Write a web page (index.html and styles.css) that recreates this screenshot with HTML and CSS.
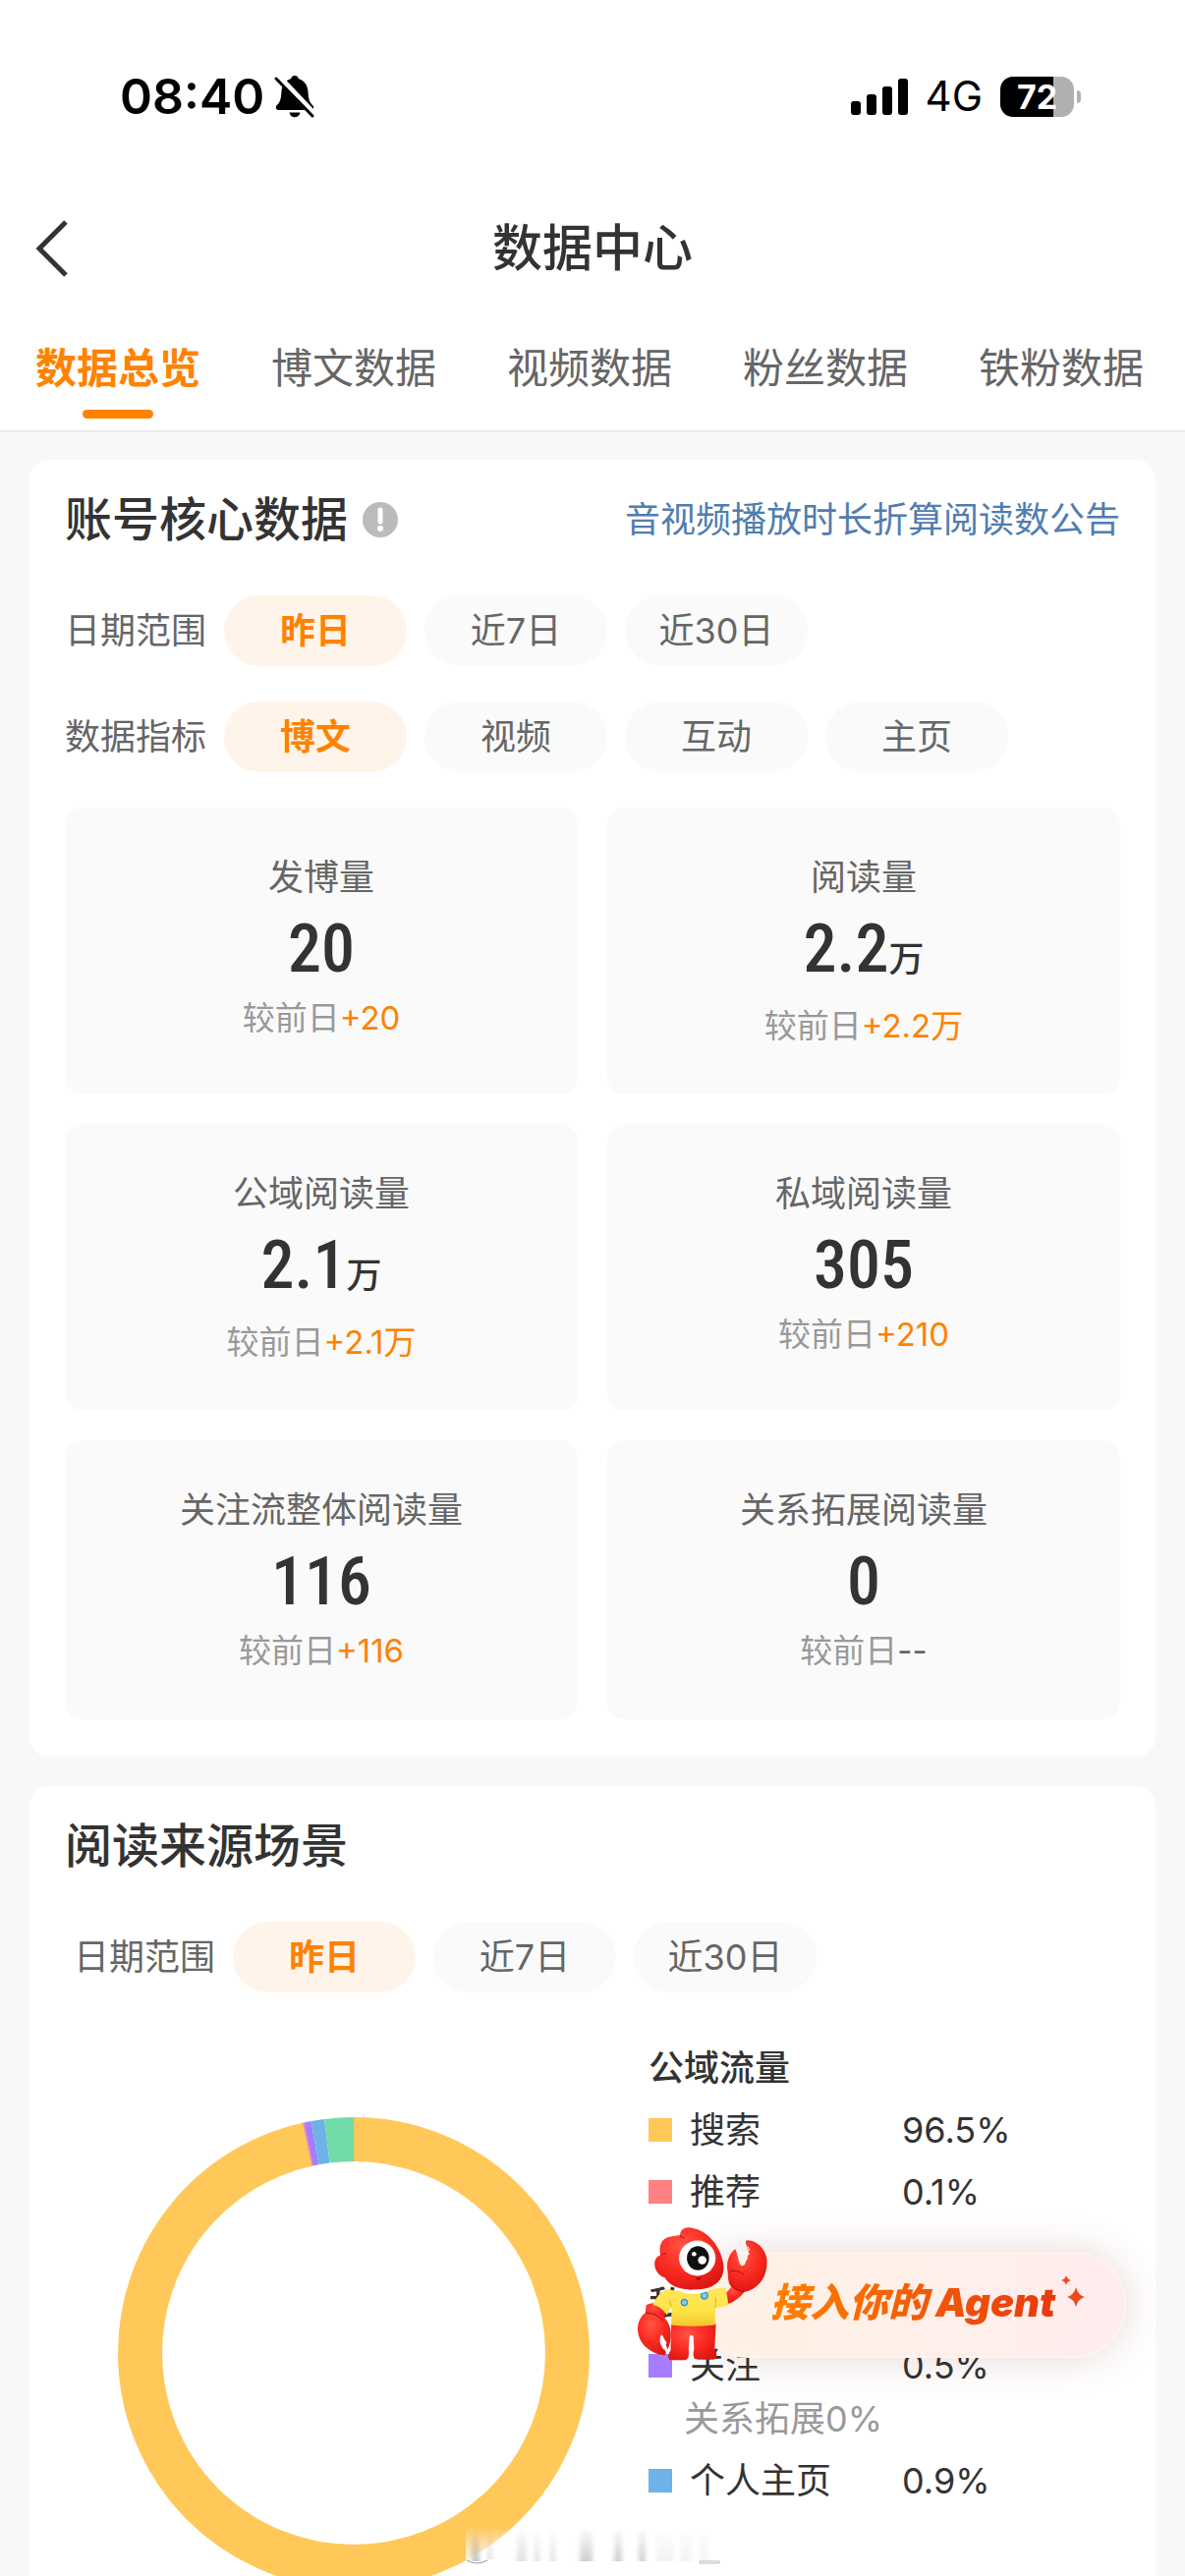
FILE: index.html
```html
<!DOCTYPE html>
<html lang="zh-CN">

<head>
    <meta charset="UTF-8">
    <meta name="viewport" content="width=device-width, initial-scale=1.0">
    <title>数据中心</title>
    <link rel="stylesheet" href="styles.css">
</head>

<body>
    <div class="app">
        <div class="status-bar">
            <span class="time">08:40</span>
            <svg class="bell" viewBox="0 0 42 44" width="42" height="44" aria-hidden="true">
                <path d="M21 1c2 0 3.500 1.300 3.700 3C31 6 34 11 34.500 17c.4 8 1.500 11 5 14.500 1.500 2 .5 4.500-2 4.500H4.500C2 36 1 33.500 2.500 31.500 6 28 7 25 7.500 17 8 11 11 6 17.300 4 17.500 2.300 19 1 21 1z" />
                <path d="M15.500 38.500h11c-.5 3-2.700 4.700-5.500 4.700s-5-1.700-5.500-4.700z" />
                <path d="M3 1l38 40" stroke="#fff" stroke-width="7" />
                <path d="M2 4l37 38" stroke="#000" stroke-width="3" stroke-linecap="round" />
            </svg>
            <svg class="signal" viewBox="0 0 58 37" width="58" height="37" aria-hidden="true">
                <rect x="0" y="23" width="10" height="14" rx="3" />
                <rect x="16" y="16" width="10" height="21" rx="3" />
                <rect x="32" y="8" width="10" height="29" rx="3" />
                <rect x="48" y="0" width="10" height="37" rx="3" />
            </svg>
            <span class="network">4G</span>
            <span class="battery">72</span>
            <span class="battery-cap"></span>
        </div>

        <header class="nav">
            <button class="back" aria-label="返回">
                <svg viewBox="0 0 34 58" width="34" height="58" aria-hidden="true">
                    <path d="M31 2L4 29l27 27" fill="none" stroke="#333" stroke-width="5" />
                </svg>
            </button>
            <h1>数据中心</h1>
        </header>

        <nav class="tabs">
            <button class="tab active">数据总览</button>
            <button class="tab">博文数据</button>
            <button class="tab">视频数据</button>
            <button class="tab">粉丝数据</button>
            <button class="tab">铁粉数据</button>
        </nav>

        <main class="content">
            <section class="card">
                <div class="card-head">
                    <h2>账号核心数据</h2>
                    <button class="info" aria-label="说明">
                        <svg viewBox="0 0 36 36" width="36" height="36" aria-hidden="true">
                            <circle cx="18" cy="18" r="18" fill="#bbb" />
                            <path d="M18 8v12" stroke="#fff" stroke-width="5" stroke-linecap="round" />
                            <circle cx="18" cy="27" r="3" fill="#fff" />
                        </svg>
                    </button>
                    <a class="notice" href="#">音视频播放时长折算阅读数公告</a>
                </div>
                <div class="filter">
                    <span class="filter-name">日期范围</span>
                    <button class="pill active">昨日</button>
                    <button class="pill">近7日</button>
                    <button class="pill">近30日</button>
                </div>
                <div class="filter">
                    <span class="filter-name">数据指标</span>
                    <button class="pill active">博文</button>
                    <button class="pill">视频</button>
                    <button class="pill">互动</button>
                    <button class="pill">主页</button>
                </div>
                <div class="stats">
                    <div class="stat">
                        <div class="label">发博量</div>
                        <div class="value">20</div>
                        <div class="change">较前日<span class="up">+20</span></div>
                    </div>
                    <div class="stat">
                        <div class="label">阅读量</div>
                        <div class="value with-unit">2.2<span class="unit">万</span></div>
                        <div class="change">较前日<span class="up">+2.2万</span></div>
                    </div>
                    <div class="stat">
                        <div class="label">公域阅读量</div>
                        <div class="value with-unit">2.1<span class="unit">万</span></div>
                        <div class="change">较前日<span class="up">+2.1万</span></div>
                    </div>
                    <div class="stat">
                        <div class="label">私域阅读量</div>
                        <div class="value">305</div>
                        <div class="change">较前日<span class="up">+210</span></div>
                    </div>
                    <div class="stat">
                        <div class="label">关注流整体阅读量</div>
                        <div class="value">116</div>
                        <div class="change">较前日<span class="up">+116</span></div>
                    </div>
                    <div class="stat">
                        <div class="label">关系拓展阅读量</div>
                        <div class="value">0</div>
                        <div class="change">较前日<span class="none">--</span></div>
                    </div>
                </div>
            </section>

            <section class="card">
                <div class="card-head">
                    <h2>阅读来源场景</h2>
                </div>
                <div class="filter indent">
                    <span class="filter-name">日期范围</span>
                    <button class="pill active">昨日</button>
                    <button class="pill">近7日</button>
                    <button class="pill">近30日</button>
                </div>
                <div class="source">
                    <div class="chart">
                        <svg viewBox="0 0 480 480" width="480" height="480" role="img" aria-label="阅读来源">
                            <g fill="none" stroke-width="45" transform="rotate(-90 240 240)">
                                <circle cx="240" cy="240" r="217.5" pathLength="1000" stroke="#ffc859" stroke-dasharray="965 1000" />
                                <circle cx="240" cy="240" r="217.5" pathLength="1000" stroke="#ff8080" stroke-dasharray="1 1000" stroke-dashoffset="-965" />
                                <circle cx="240" cy="240" r="217.5" pathLength="1000" stroke="#a67dff" stroke-dasharray="5 1000" stroke-dashoffset="-966" />
                                <circle cx="240" cy="240" r="217.5" pathLength="1000" stroke="#6eb2e8" stroke-dasharray="9 1000" stroke-dashoffset="-971" />
                                <circle cx="240" cy="240" r="217.5" pathLength="1000" stroke="#70dba7" stroke-dasharray="20 1000" stroke-dashoffset="-980" />
                            </g>
                        </svg>
                    </div>
                    <div class="legend">
                        <h3>公域流量</h3>
                        <ul>
                            <li><i class="dot yellow"></i><span>搜索</span><span>96.5%</span></li>
                            <li><i class="dot red"></i><span>推荐</span><span>0.1%</span></li>
                        </ul>
                        <h3>私域流量</h3>
                        <ul>
                            <li><i class="dot purple"></i><span>关注</span><span>0.5%</span></li>
                            <li class="sub">关系拓展0%</li>
                            <li><i class="dot blue"></i><span>个人主页</span><span>0.9%</span></li>
                        </ul>
                    </div>
                </div>
            </section>
        </main>

        <button class="agent">
            <svg class="mascot" viewBox="50 80 402 416" width="134" height="138" aria-hidden="true">
                <defs>
                    <radialGradient id="red" cx="0.4" cy="0.3" r="0.75">
                        <stop offset="0" stop-color="#ff5546" />
                        <stop offset="0.5" stop-color="#fc2c22" />
                        <stop offset="1" stop-color="#dc1612" />
                    </radialGradient>
                    <linearGradient id="shirt" x1="0" y1="0" x2="0" y2="1">
                        <stop offset="0" stop-color="#ffe45c" />
                        <stop offset="0.6" stop-color="#ffe548" />
                        <stop offset="1" stop-color="#f5c52c" />
                    </linearGradient>
                </defs>
                <!-- legs -->
                <path d="M155 380h137l-4 78c10 15 8 30-6 31h-45c-16 0-16-18-12-32l-2-38c-1-6-11-6-12 0l-3 38c3 20-1 34-12 34h-40c-14 0-12-20-3-30z" fill="url(#red)" />
                <!-- raised claw -->
                <path d="M320 288q18-16 28-36l34 26q-20 28-52 40z" fill="url(#red)" />
                <path d="M352 150c-18 10-28 38-25 62 3 14 1 32 6 44 12 22 36 30 60 22 40-16 60-56 55-100-6-30-30-54-60-55-8 2-4 12 0 20 4 12 4 24-1 36l-6 18c-6 8-15 4-18-8-4-12-5-28-11-39z" fill="url(#red)" />
                <path d="M390 143l5 9-7 5 6 8-9 6 3 9-8 5M355 158l7 5-3 7 7 5-2 7 6 4" fill="none" stroke="#fff" stroke-width="3" />
                <path d="M332 220q22-10 46 8M338 258q16 22 42 22" fill="none" stroke="#b80c0c" stroke-width="3" />
                <!-- lowered claw -->
                <path d="M78 322q30-16 62 12l-8 32-58 0z" fill="url(#red)" />
                <path d="M78 344c-22 14-30 44-24 68 8 34 40 58 78 64 10-2 8-12 0-20-10-12-14-28-4-42 8 14 10 32 16 44 10-22 14-54 4-76-14-32-42-48-70-38z" fill="url(#red)" />
                <path d="M124 412c-7 18-4 30 8 46l6-1-1-15 5-3z" fill="#fff" />
                <path d="M76 346q28-2 56 24" fill="none" stroke="#b80c0c" stroke-width="3" />
                <!-- shirt -->
                <path d="M140 274q56 10 132 0l50-6 9 54q-22 8-41 9l-1 52q-70 8-134 0l1-56-14 26q-18-28-43-32 13-34 41-47z" fill="url(#shirt)" />
                <path d="M290 330l2-32M156 328l-6-22" fill="none" stroke="#dfb02a" stroke-width="3" />
                <g fill="#69bbea" stroke="#2a83c0" stroke-width="3">
                    <circle cx="195" cy="314" r="10" />
                    <circle cx="257" cy="293" r="11" />
                </g>
                <g fill="#8ecff0">
                    <circle cx="195" cy="314" r="5" />
                    <circle cx="257" cy="293" r="5" />
                </g>
                <!-- head -->
                <path d="M160 258q42 26 116 14-24 18-64 16-36-4-52-30z" fill="#fff" />
                <path d="M182 108c0-20 18-28 40-22 38 8 68 38 84 78 14 36 14 66-8 88-20 18-46 24-90 22-34-2-60-14-72-36-22-6-34-28-32-48 2-12 8-18 18-22-6-28 2-52 32-56 10-2 20-4 28-4z" fill="url(#red)" />
                <path d="M182 108q4 6 14 8M122 168q8-6 18-4" fill="none" stroke="#d01414" stroke-width="4" />
                <ellipse cx="235" cy="178" rx="56" ry="54" fill="#fff" />
                <ellipse cx="237" cy="178" rx="34" ry="37" fill="#101010" />
                <circle cx="250" cy="184" r="13" fill="#fff" />
                <circle cx="225" cy="165" r="7" fill="#fff" />
                <path d="M231 235q8 5 15 0-1 11-8 11-6 0-7-11z" fill="#a30808" />
            </svg>
            <span class="agent-text">接入你的 Agent</span>
            <svg class="sparkle" viewBox="0 0 26 34" width="26" height="34" aria-hidden="true">
                <path d="M7 0q1 4 5 5-4 1-5 5-1-4-5-5 4-1 5-5zM17 12q2 8 9 10-7 2-9 10-2-8-9-10 7-2 9-10z" fill="#ec4a1c" />
            </svg>
        </button>

        <svg class="stamp" viewBox="0 0 264 40" width="264" height="40" aria-hidden="true">
            <defs>
                <linearGradient id="fade" x1="0" y1="0" x2="0" y2="1">
                    <stop offset="0" stop-color="#888" stop-opacity="0.05" />
                    <stop offset="1" stop-color="#888" stop-opacity="0.5" />
                </linearGradient>
                <linearGradient id="glow" x1="0" y1="0" x2="0" y2="1">
                    <stop offset="0" stop-color="#fff" stop-opacity="0.1" />
                    <stop offset="1" stop-color="#fff" stop-opacity="0.85" />
                </linearGradient>
                <filter id="soft">
                    <feGaussianBlur stdDeviation="2 0" />
                </filter>
            </defs>
            <rect x="2" y="2" width="48" height="32" fill="url(#glow)" />
            <path d="M3 34q10 6 21 0" fill="#fff" stroke="#999" />
            <path d="M240 35h20v2h-20z" fill="#fff" stroke="#bbb" />
            <g fill="url(#fade)" filter="url(#soft)">
                <rect x="8" y="3" width="8" height="32" />
                <rect x="24" y="1" width="5" height="32" opacity="0.5" />
                <rect x="54" y="3" width="10" height="32" opacity="0.5" />
                <rect x="72" y="3" width="5" height="32" opacity="0.5" />
                <rect x="88" y="3" width="5" height="32" opacity="0.5" />
                <rect x="118" y="3" width="13" height="32" opacity="0.8" />
                <rect x="153" y="3" width="8" height="32" opacity="0.8" />
                <rect x="178" y="3" width="7" height="32" opacity="0.8" />
                <rect x="196" y="3" width="18" height="32" opacity="0.2" />
                <rect x="220" y="3" width="12" height="32" opacity="0.2" />
                <rect x="240" y="3" width="8" height="32" opacity="0.2" />
            </g>
        </svg>
    </div>
</body>

</html>
```

FILE: styles.css
```css
* {
    box-sizing: border-box;
}

body {
    margin: 0;
    background: #f8f8f8;
    color: #333;
    font-family: Inter, "Noto Sans CJK SC", sans-serif;
    font-size: 36px;
    line-height: 52px;
}

h1,
h2,
h3,
ul {
    margin: 0;
    padding: 0;
}

button {
    padding: 0;
    border: none;
    background: none;
    color: inherit;
    font: inherit;
    cursor: pointer;
}

svg {
    display: block;
}

.app {
    display: flex;
    flex-direction: column;
    height: 100vh;
}

/* status bar */
.status-bar {
    display: flex;
    align-items: center;
    flex-shrink: 0;
    height: 196px;
    padding: 0 106px 0 122px;
    background: #fff;
    color: #000;
}

.time {
    font-size: 50px;
    font-weight: 600;
}

.bell {
    margin-left: 10px;
}

.signal {
    margin-left: auto;
}

.network {
    margin: 0 18px;
    font-size: 42px;
}

.battery {
    width: 75px;
    height: 41px;
    border-radius: 13px;
    background: linear-gradient(90deg, #000 72%, #b0b0b0 72%);
    color: #fff;
    font-size: 34px;
    font-weight: 700;
    line-height: 41px;
    text-align: center;
}

.battery-cap {
    width: 4px;
    height: 13px;
    margin-left: 3px;
    border-radius: 0 6px 6px 0;
    background: #b0b0b0;
}

/* header */
.nav {
    display: grid;
    grid-template-columns: 1fr auto 1fr;
    align-items: center;
    flex-shrink: 0;
    height: 114px;
    padding: 0 36px;
    background: #fff;
}

.nav h1 {
    font-size: 51px;
    font-weight: 500;
    line-height: 60px;
}

.tabs {
    display: flex;
    flex-shrink: 0;
    padding-right: 6px;
    border-bottom: 2px solid #ececec;
    background: #fff;
}

.tab {
    display: flex;
    flex: 1;
    flex-direction: column;
    align-items: center;
    gap: 15px;
    padding: 38px 0 12px;
    color: #666;
    font-size: 42px;
    line-height: 54px;
}

.tab::after {
    content: "";
    width: 72px;
    height: 9px;
    border-radius: 5px;
}

.tab.active {
    color: #ff8200;
    font-weight: 600;
}

.tab.active::after {
    background: #ff8200;
}

/* cards */
.content {
    display: flex;
    flex: 1;
    flex-direction: column;
    gap: 30px;
    min-height: 0;
    padding: 28px 30px;
    overflow-y: auto;
    scrollbar-width: none;
}

.card {
    flex-shrink: 0;
    padding: 30px 36px 38px;
    border-radius: 20px;
    background: #fff;
}

.card-head {
    display: flex;
    align-items: center;
    margin-bottom: 46px;
}

.card-head h2 {
    font-size: 48px;
    font-weight: 500;
    line-height: 62px;
}

.info {
    margin-left: 15px;
}

.notice {
    margin-left: auto;
    color: #507daf;
    text-decoration: none;
}

.filter {
    display: flex;
    align-items: center;
    gap: 18px;
    margin-bottom: 36px;
    color: #666;
}

.filter.indent {
    padding-left: 9px;
}

.pill {
    width: 186px;
    height: 72px;
    border-radius: 36px;
    background: #fafafa;
}

.pill.active {
    background: #fff4e9;
    color: #ff8200;
    font-weight: 600;
}

.stats {
    display: grid;
    grid-template-columns: 1fr 1fr;
    gap: 30px;
}

.stat {
    padding: 45px 0 47px;
    border-radius: 18px;
    background: #fafafa;
    text-align: center;
}

.label {
    color: #666;
}

.value {
    font-family: "Roboto Condensed", Roboto, "Noto Sans CJK SC", sans-serif;
    font-size: 68px;
    font-weight: 500;
    line-height: 94px;
}

.value.with-unit {
    padding-bottom: 8px;
}

.unit {
    font-size: 36px;
    line-height: 36px;
}

.change {
    color: #999;
    font-size: 33px;
    line-height: 46px;
}

.up {
    color: #ff8200;
}

.none {
    color: #666;
}

/* reading sources */
.source {
    display: grid;
    grid-template-columns: 1fr 480px;
    padding-top: 15px;
}

.chart {
    display: flex;
    justify-content: center;
    padding: 76px 6px 0 0;
}

.legend h3 {
    font-size: 36px;
    font-weight: 500;
}

.legend ul + h3 {
    margin-top: 62px;
}

.legend li {
    display: grid;
    grid-template-columns: 24px 198px 1fr;
    column-gap: 18px;
    align-items: center;
    margin-top: 11px;
}

.legend .sub {
    display: block;
    margin-top: 2px;
    padding-left: 36px;
    color: #999;
}

.dot {
    height: 24px;
}

.yellow {
    background: #ffc859;
}

.red {
    background: #ff8080;
}

.purple {
    background: #a67dff;
}

.blue {
    background: #6eb2e8;
}

/* floating entry */
.agent {
    position: fixed;
    right: 60px;
    bottom: 218px;
    display: flex;
    align-items: flex-end;
}

.agent::before {
    content: "";
    position: absolute;
    inset: 26px 0 4px 60px;
    z-index: -1;
    border: 2px solid #fff3ee;
    border-radius: 54px;
    background: linear-gradient(90deg, #fff1e4, #ffedee);
    box-shadow: 0 0 40px rgba(120, 40, 20, 0.18);
}

.agent-text {
    margin-bottom: 34px;
    padding: 0 4px 0 2px;
    background: linear-gradient(90deg, #ff8200, #e8380d);
    background-clip: text;
    -webkit-background-clip: text;
    color: transparent;
    font-size: 40px;
    font-style: italic;
    font-weight: 900;
}

.sparkle {
    margin: 0 42px 54px 0;
}

.stamp {
    position: fixed;
    bottom: 10px;
    left: 472px;
}
```
